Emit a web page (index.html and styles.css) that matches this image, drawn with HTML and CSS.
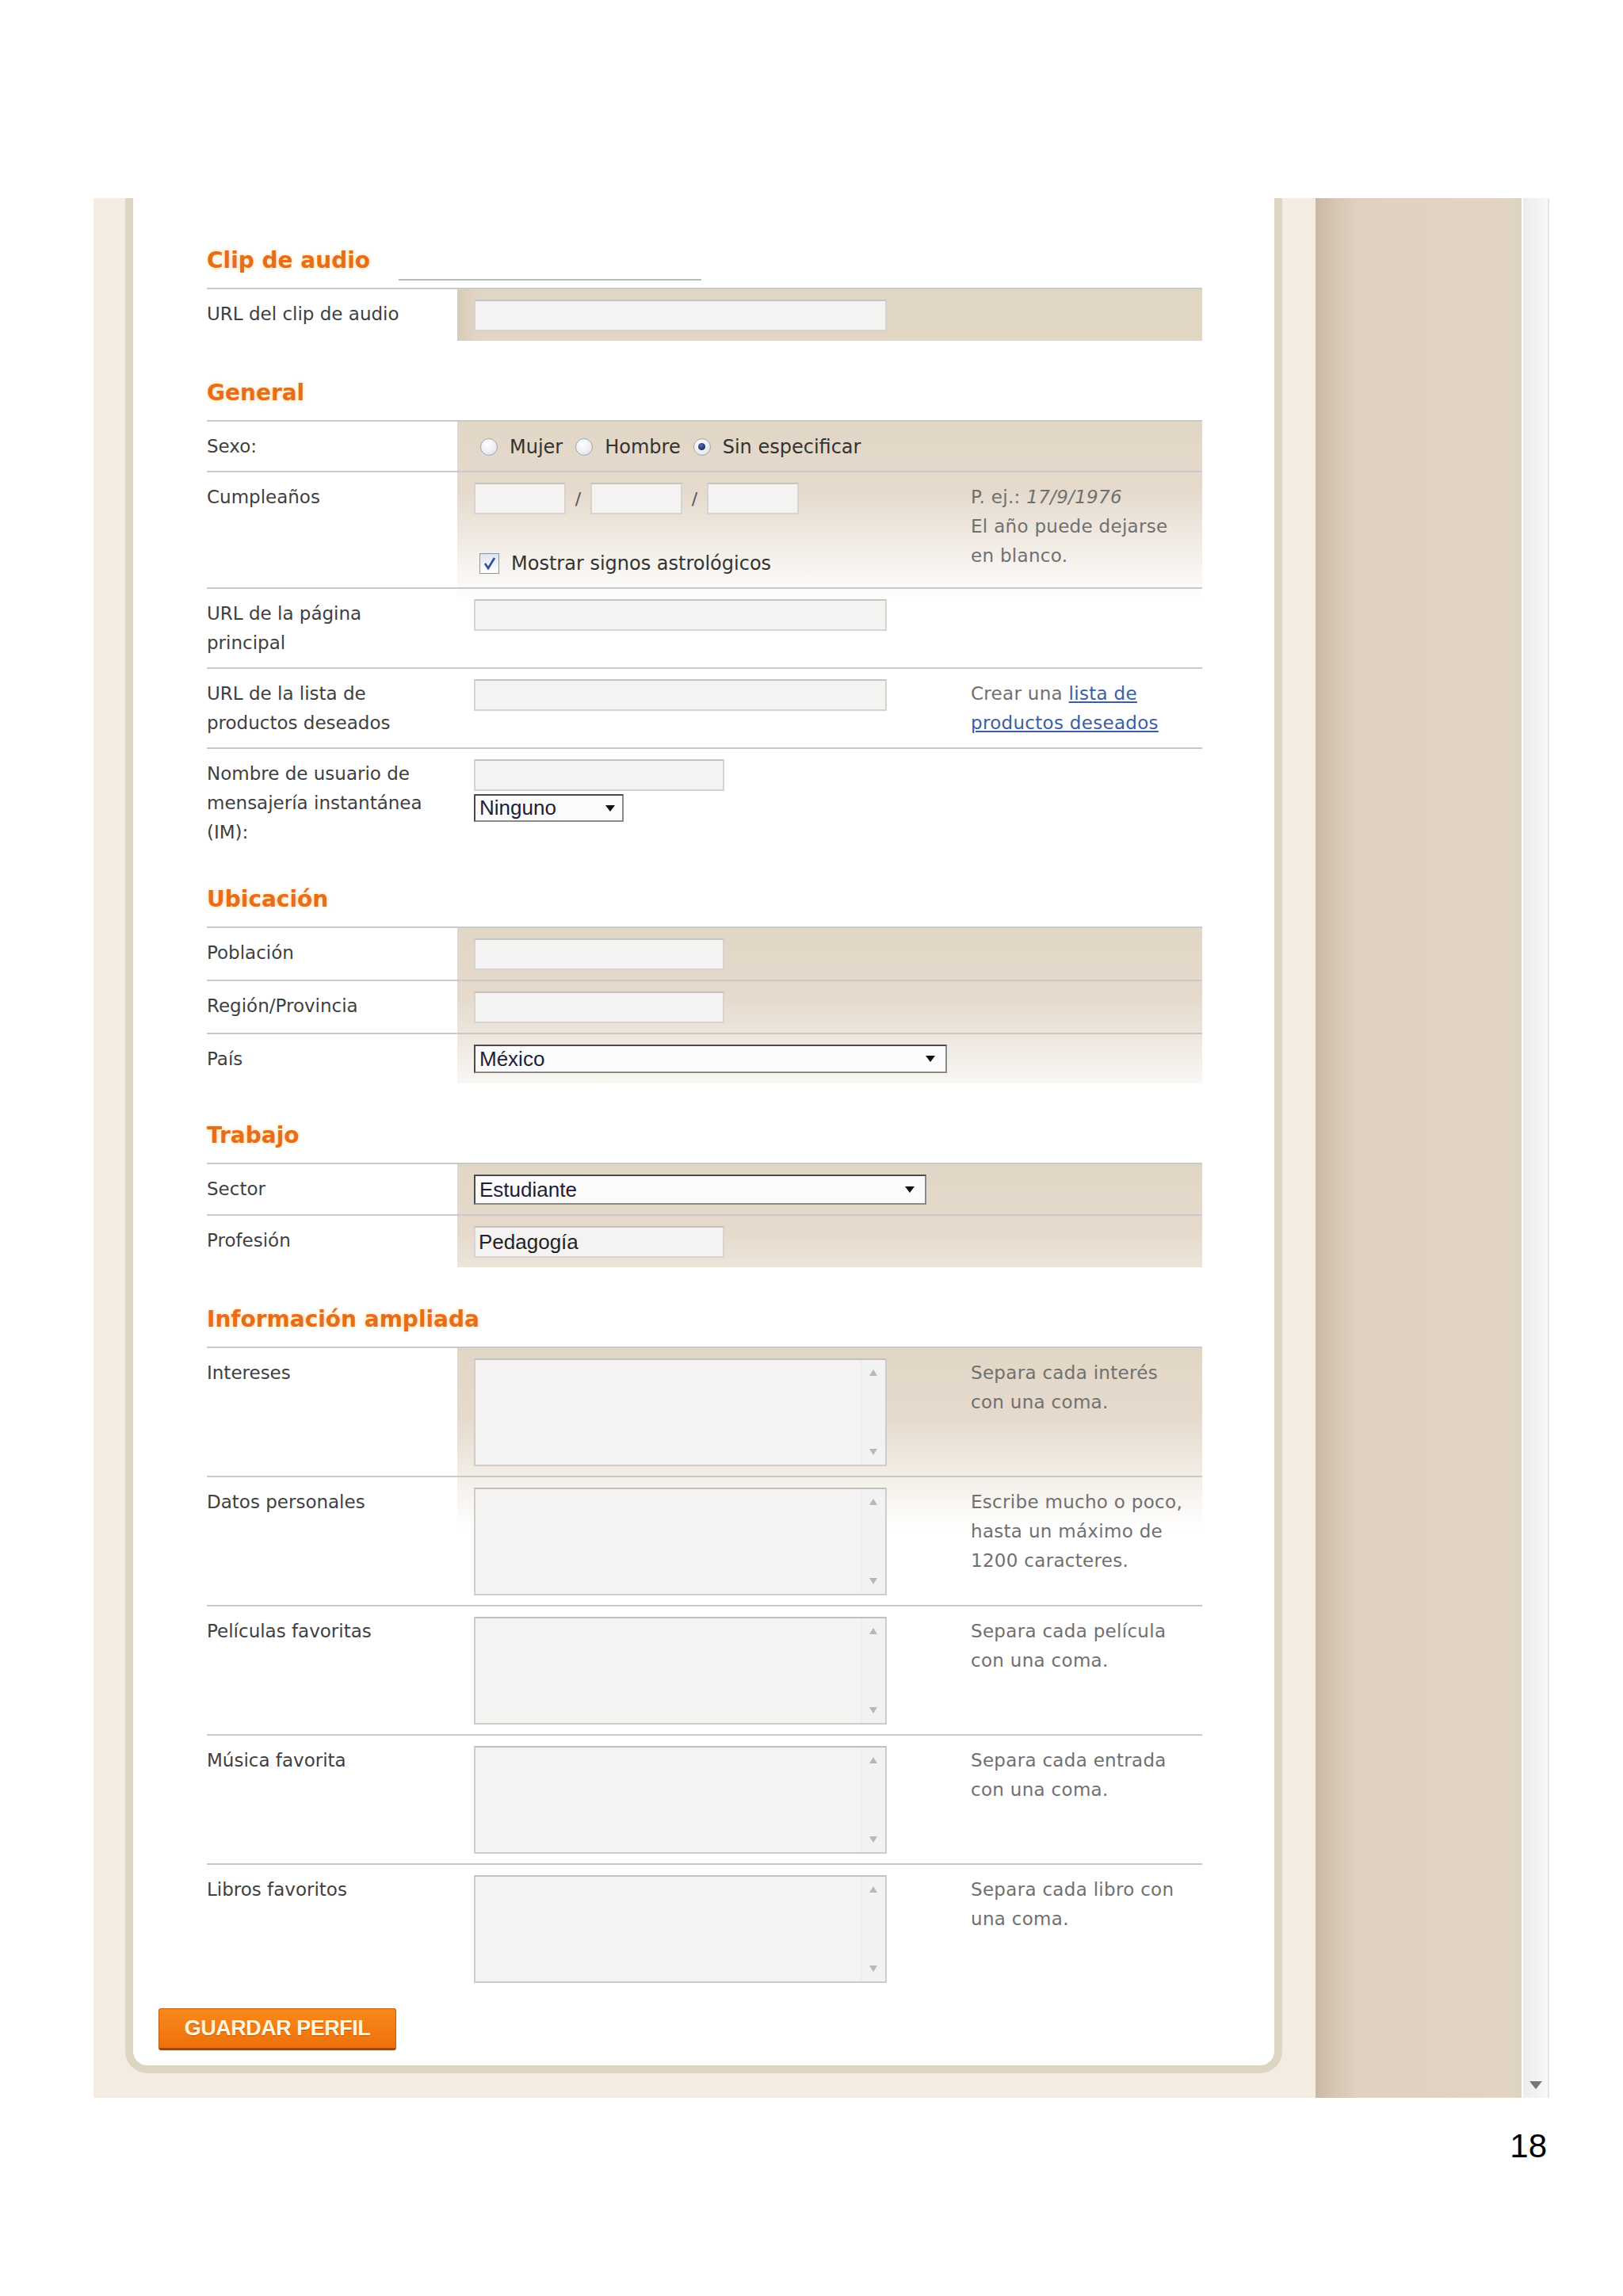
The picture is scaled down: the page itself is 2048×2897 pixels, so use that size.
FILE: index.html
```html
<!DOCTYPE html>
<html>
<head>
    <title>Editar perfil</title>
    <link rel="stylesheet" href="styles.css">
</head>
<body>
    <div class="frame">
        <div class="panel">
            <div class="card">
                <form class="profile">

                    <section class="group">
                        <h2 class="group-title">Clip de audio<span class="title-rule"></span></h2>
                        <div class="rows rows-solid">
                            <div class="row">
                                <label class="row-label">URL del clip de audio</label>
                                <div class="row-field"><input type="text" class="text-input wide"></div>
                            </div>
                        </div>
                    </section>

                    <section class="group">
                        <h2 class="group-title">General</h2>
                        <div class="rows">
                            <div class="row">
                                <label class="row-label">Sexo:</label>
                                <div class="row-field choice-line">
                                    <span class="radio"></span><span class="choice-text">Mujer</span>
                                    <span class="radio"></span><span class="choice-text">Hombre</span>
                                    <span class="radio checked"></span><span class="choice-text">Sin especificar</span>
                                </div>
                            </div>
                            <div class="row">
                                <label class="row-label">Cumpleaños</label>
                                <div class="row-field">
                                    <div class="date-inputs">
                                        <input type="text" class="text-input date">
                                        <span class="date-slash">/</span>
                                        <input type="text" class="text-input date">
                                        <span class="date-slash">/</span>
                                        <input type="text" class="text-input date">
                                    </div>
                                    <div class="choice-line check-line">
                                        <span class="checkbox">
                                            <svg width="16" height="18" viewBox="0 0 16 18"><path d="M2 9 L6 15 L14 2" fill="none" stroke="#2e4f9e" stroke-width="2.6"/></svg>
                                        </span>
                                        <span class="choice-text">Mostrar signos astrológicos</span>
                                    </div>
                                </div>
                                <div class="row-hint">P. ej.: <em>17/9/1976</em><br>El año puede dejarse<br>en blanco.</div>
                            </div>
                            <div class="row">
                                <label class="row-label">URL de la página<br>principal</label>
                                <div class="row-field"><input type="text" class="text-input wide"></div>
                            </div>
                            <div class="row">
                                <label class="row-label">URL de la lista de<br>productos deseados</label>
                                <div class="row-field"><input type="text" class="text-input wide"></div>
                                <div class="row-hint">Crear una <a href="#" class="hint-link">lista de<br>productos deseados</a></div>
                            </div>
                            <div class="row row-last">
                                <label class="row-label">Nombre de usuario de<br>mensajería instantánea<br>(IM):</label>
                                <div class="row-field">
                                    <input type="text" class="text-input short">
                                    <div class="select select-im"><span>Ninguno</span><svg width="12" height="8" viewBox="0 0 12 8"><path d="M0 0 H12 L6 8 Z" fill="#111"/></svg></div>
                                </div>
                            </div>
                        </div>
                    </section>

                    <section class="group">
                        <h2 class="group-title">Ubicación</h2>
                        <div class="rows">
                            <div class="row">
                                <label class="row-label">Población</label>
                                <div class="row-field"><input type="text" class="text-input short"></div>
                            </div>
                            <div class="row">
                                <label class="row-label">Región/Provincia</label>
                                <div class="row-field"><input type="text" class="text-input short"></div>
                            </div>
                            <div class="row">
                                <label class="row-label">País</label>
                                <div class="row-field">
                                    <div class="select select-country"><span>México</span><svg width="12" height="8" viewBox="0 0 12 8"><path d="M0 0 H12 L6 8 Z" fill="#111"/></svg></div>
                                </div>
                            </div>
                        </div>
                    </section>

                    <section class="group">
                        <h2 class="group-title">Trabajo</h2>
                        <div class="rows">
                            <div class="row">
                                <label class="row-label">Sector</label>
                                <div class="row-field">
                                    <div class="select select-sector"><span>Estudiante</span><svg width="12" height="8" viewBox="0 0 12 8"><path d="M0 0 H12 L6 8 Z" fill="#111"/></svg></div>
                                </div>
                            </div>
                            <div class="row">
                                <label class="row-label">Profesión</label>
                                <div class="row-field"><input type="text" class="text-input short filled" value="Pedagogía"></div>
                            </div>
                        </div>
                    </section>

                    <section class="group">
                        <h2 class="group-title">Información ampliada</h2>
                        <div class="rows">
                            <div class="row">
                                <label class="row-label">Intereses</label>
                                <div class="row-field">
                                    <div class="textbox"><textarea></textarea><div class="textbox-scroll"><span class="arrow-up"></span><span class="arrow-down"></span></div></div>
                                </div>
                                <div class="row-hint">Separa cada interés<br>con una coma.</div>
                            </div>
                            <div class="row">
                                <label class="row-label">Datos personales</label>
                                <div class="row-field">
                                    <div class="textbox"><textarea></textarea><div class="textbox-scroll"><span class="arrow-up"></span><span class="arrow-down"></span></div></div>
                                </div>
                                <div class="row-hint">Escribe mucho o poco,<br>hasta un máximo de<br>1200 caracteres.</div>
                            </div>
                            <div class="row">
                                <label class="row-label">Películas favoritas</label>
                                <div class="row-field">
                                    <div class="textbox"><textarea></textarea><div class="textbox-scroll"><span class="arrow-up"></span><span class="arrow-down"></span></div></div>
                                </div>
                                <div class="row-hint">Separa cada película<br>con una coma.</div>
                            </div>
                            <div class="row">
                                <label class="row-label">Música favorita</label>
                                <div class="row-field">
                                    <div class="textbox"><textarea></textarea><div class="textbox-scroll"><span class="arrow-up"></span><span class="arrow-down"></span></div></div>
                                </div>
                                <div class="row-hint">Separa cada entrada<br>con una coma.</div>
                            </div>
                            <div class="row">
                                <label class="row-label">Libros favoritos</label>
                                <div class="row-field">
                                    <div class="textbox"><textarea></textarea><div class="textbox-scroll"><span class="arrow-up"></span><span class="arrow-down"></span></div></div>
                                </div>
                                <div class="row-hint">Separa cada libro con<br>una coma.</div>
                            </div>
                        </div>
                    </section>

                </form>
                <button class="save-button">GUARDAR PERFIL</button>
            </div>
        </div>
        <div class="sidebar"></div>
        <div class="scrollbar">
            <svg width="16" height="10" viewBox="0 0 16 10"><path d="M0 0 H16 L8 10 Z" fill="#777"/></svg>
        </div>
    </div>
    <div class="page-number">18</div>
</body>
</html>
```

FILE: styles.css
```css
body {
    margin: 0;
    background-color: #ffffff;
    font-family: 'DejaVu Sans', Verdana, sans-serif;
}

.frame {
    display: flex;
    margin: 250px 0 0 118px;
    width: 1837px;
}

.panel {
    width: 1542px;
    box-sizing: border-box;
    background-color: #f4ece3;
    padding: 0 42px 31px 40px;
}

.card {
    background-color: #ffffff;
    border: 10px solid #ddd5c2;
    border-top: none;
    border-radius: 0 0 28px 28px;
    padding: 59px 0 19px;
}

.profile {
    margin: 0 91px 0 93px;
}

.group-title {
    display: flex;
    align-items: flex-end;
    margin: 46px 0 9px;
    padding-bottom: 5px;
    font-size: 28px;
    line-height: 40px;
    font-weight: bold;
    color: #e86d1a;
    text-shadow: 0 0 4px rgba(255, 200, 110, 0.8);
}

.group:first-child .group-title {
    margin-top: 0;
}

.title-rule {
    width: 382px;
    height: 2px;
    margin: 0 0 -5px 36px;
    background-color: #b9b9b9;
}

.rows {
    background:
        linear-gradient(to right, #ffffff 316px, rgba(255, 255, 255, 0) 316px),
        linear-gradient(to bottom, #e2d6c6 0, #e5dacc 90px, #ffffff 230px);
}

.rows-solid {
    background:
        linear-gradient(to right, #ffffff 316px, rgba(255, 255, 255, 0) 316px),
        linear-gradient(to right, #d9cbb9 316px, #e1d5c4 340px);
}

.row {
    display: grid;
    grid-template-columns: 316px 648px 1fr;
    border-top: 2px solid #c9c9c9;
    padding: 13px 0 12px;
}

.row-last {
    padding-bottom: 0;
}

.row-label {
    font-size: 23px;
    line-height: 37px;
    color: #3f3f3f;
}

.row-field {
    padding-left: 21px;
}

.row-hint {
    font-size: 23px;
    line-height: 37px;
    color: #707070;
    letter-spacing: 0.3px;
}

.hint-link {
    color: #3b5ea6;
}

.text-input {
    display: block;
    box-sizing: border-box;
    height: 40px;
    margin: 0;
    padding: 0 4px;
    border: 2px solid #d6d4d1;
    border-top-color: #c6c4c1;
    background-color: #f4f3f1;
    font-family: 'Liberation Sans', Arial, sans-serif;
    font-size: 26px;
    color: #222222;
    outline: none;
}

.wide {
    width: 521px;
}

.short {
    width: 316px;
}

.date {
    width: 116px;
}

.date-inputs {
    display: flex;
    align-items: center;
}

.date-slash {
    width: 31px;
    text-align: center;
    font-size: 22px;
    color: #555555;
}

.choice-line {
    display: flex;
    align-items: center;
    height: 37px;
}

.check-line {
    margin-top: 43px;
    padding-left: 7px;
}

.choice-text {
    font-size: 24px;
    color: #333333;
    margin: 0 16px 0 15px;
}

.radio {
    box-sizing: border-box;
    width: 22px;
    height: 22px;
    border-radius: 50%;
    border: 1px solid #a3a8b4;
    background: radial-gradient(circle at 40% 35%, #ffffff 0, #e9ecf1 60%, #d5dae3 100%);
    display: flex;
    align-items: center;
    justify-content: center;
}

.choice-line .radio:first-child {
    margin-left: 8px;
}

.radio.checked::after {
    content: '';
    width: 9px;
    height: 9px;
    border-radius: 50%;
    background: radial-gradient(circle at 40% 35%, #5b6fb0 0, #1b2b66 70%);
}

.checkbox {
    box-sizing: border-box;
    width: 25px;
    height: 26px;
    border: 1px solid #8797b2;
    background: linear-gradient(#dfe4ee, #ffffff);
    display: flex;
    align-items: center;
    justify-content: center;
}

.select {
    box-sizing: border-box;
    display: flex;
    align-items: center;
    justify-content: space-between;
    padding: 0 13px 0 5px;
    border: 2px solid #8a8a8a;
    border-top-color: #4b4b4b;
    border-left-color: #4b4b4b;
    background-color: #fbfbfb;
    font-family: 'Liberation Sans', Arial, sans-serif;
    font-size: 26px;
    color: #1e1e3a;
}

.select-im {
    width: 189px;
    height: 35px;
    margin-top: 4px;
    padding-right: 9px;
}

.select-country {
    width: 597px;
    height: 36px;
}

.select-sector {
    width: 571px;
    height: 38px;
}

.textbox {
    display: flex;
    box-sizing: border-box;
    width: 521px;
    height: 136px;
    border: 2px solid #cfcdca;
    border-top-color: #c2c0bd;
    background-color: #f4f3f1;
}

.textbox textarea {
    flex: 1;
    border: none;
    background: transparent;
    resize: none;
    outline: none;
}

.textbox-scroll {
    width: 30px;
    border-left: 1px solid #e9e9e9;
    background-color: #f2f2f2;
    display: flex;
    flex-direction: column;
    align-items: center;
    justify-content: space-between;
    padding: 12px 0;
}

.arrow-up,
.arrow-down {
    width: 0;
    height: 0;
    border-left: 5px solid transparent;
    border-right: 5px solid transparent;
}

.arrow-up {
    border-bottom: 8px solid #b8b8b8;
}

.arrow-down {
    border-top: 8px solid #b8b8b8;
}

.save-button {
    display: block;
    width: 300px;
    height: 53px;
    margin: 20px 0 0 32px;
    border: 1px solid #c35c0c;
    border-bottom: 3px solid #9c4a0b;
    border-radius: 3px;
    background: linear-gradient(#f8891c, #ef700b);
    color: #fff4dc;
    font-family: 'Liberation Sans', Arial, sans-serif;
    font-weight: bold;
    font-size: 27px;
    letter-spacing: -0.5px;
    text-shadow: 0 1px 0 rgba(120, 50, 0, 0.5);
    cursor: pointer;
}

.sidebar {
    width: 260px;
    background: linear-gradient(to right, #c8b7a4 0, #d5c5b3 22px, #e1d1c0 55px, #e3d3c2 85%, #e0d5c2 96%, #d9d4bf 100%);
}

.scrollbar {
    width: 33px;
    margin-left: 2px;
    box-sizing: border-box;
    border-right: 2px solid #e6e6e6;
    background: linear-gradient(to right, #ececec, #f8f8f8);
    display: flex;
    flex-direction: column;
    justify-content: flex-end;
    align-items: center;
    padding-bottom: 11px;
}

.page-number {
    width: 1837px;
    margin: 37px 0 0 118px;
    box-sizing: border-box;
    padding-right: 3px;
    text-align: right;
    font-family: 'Liberation Sans', Arial, sans-serif;
    font-size: 42px;
    line-height: 48px;
    color: #000000;
}
```
